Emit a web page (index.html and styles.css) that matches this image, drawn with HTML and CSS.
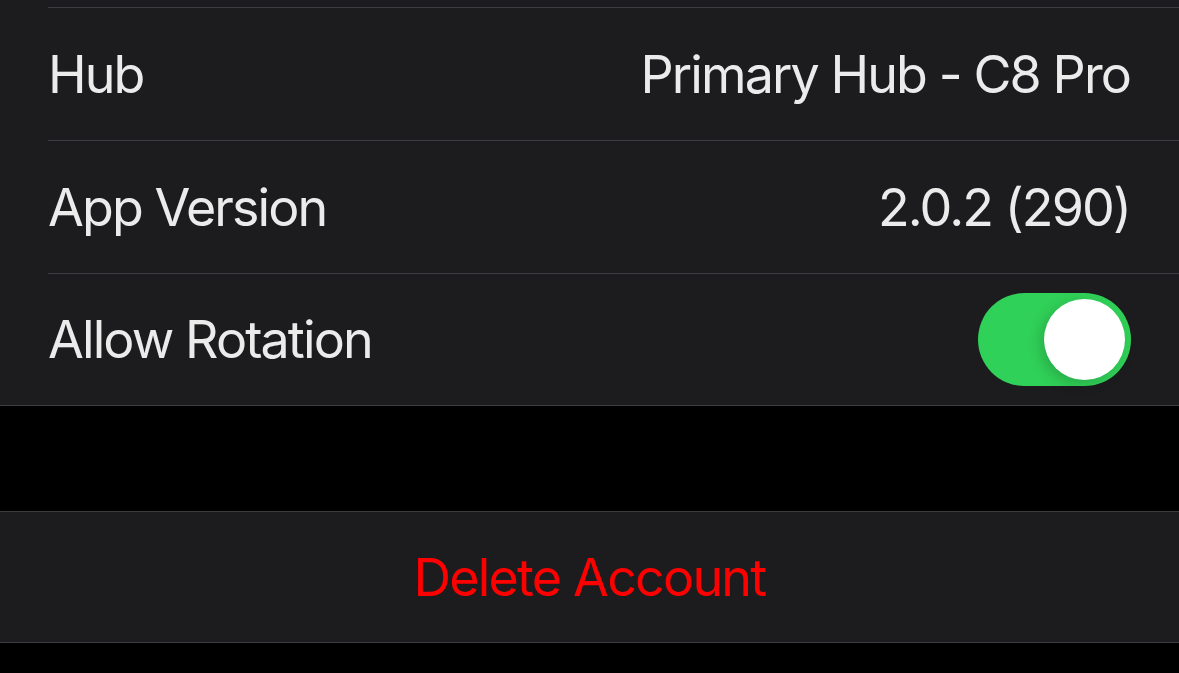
FILE: index.html
```html
<!DOCTYPE html>
<html lang="en">
<head>
  <meta charset="UTF-8" />
  <meta name="viewport" content="width=device-width, initial-scale=1.0"/>
  <title>Settings</title>
  <link rel="stylesheet" href="styles.css">
</head>
<body>

  <!-- Ajustes generales -->
  <section class="group">
    <div class="peek"></div>

    <div class="row">
      <div class="row-body">
        <span class="label">Hub</span>
        <span class="value">Primary Hub - C8 Pro</span>
      </div>
    </div>

    <div class="row">
      <div class="row-body">
        <span class="label">App Version</span>
        <span class="value">2.0.2 (290)</span>
      </div>
    </div>

    <div class="row">
      <div class="row-body">
        <span class="label">Allow Rotation</span>
        <div class="toggle on"><div class="knob"></div></div>
      </div>
    </div>
  </section>

  <div class="spacer"></div>

  <!-- Zona peligrosa -->
  <section class="group">
    <div class="danger-row">
      <span class="danger">Delete Account</span>
    </div>
  </section>

</body>
</html>
```

FILE: styles.css
```css
html, body {
  margin: 0;
  padding: 0;
  background-color: #000000;
  font-family: Inter, "Noto Sans", sans-serif;
}

.group {
  background-color: #1c1c1e;
  border-bottom: 1px solid #3d3d41;
}

.peek {
  height: 7px;
}

.spacer {
  height: 105px;
  border-bottom: 1px solid #3d3d41;
}

.row {
  padding-left: 48px;
}

.row-body {
  box-sizing: border-box;
  height: 133px;
  border-top: 1px solid #3d3d41;
  padding-right: 48px;
  display: flex;
  align-items: center;
  justify-content: space-between;
}

.row:last-child .row-body {
  height: 132px;
}

.label, .value {
  font-size: 52px;
  letter-spacing: -1.9px;
  color: #ebebeb;
}

.value {
  margin-right: 1px;
}

.toggle {
  width: 153px;
  height: 93px;
  border-radius: 47px;
  background-color: #30d158;
  position: relative;
}

.knob {
  position: absolute;
  top: 6px;
  right: 6px;
  width: 81px;
  height: 81px;
  border-radius: 50%;
  background: #ffffff;
  box-shadow: -4px 4px 14px rgba(0, 0, 0, 0.18);
}

.danger-row {
  height: 130px;
  display: flex;
  align-items: center;
  justify-content: center;
}

.danger {
  font-size: 52px;
  letter-spacing: -1.8px;
  color: #ff0000;
}
```
